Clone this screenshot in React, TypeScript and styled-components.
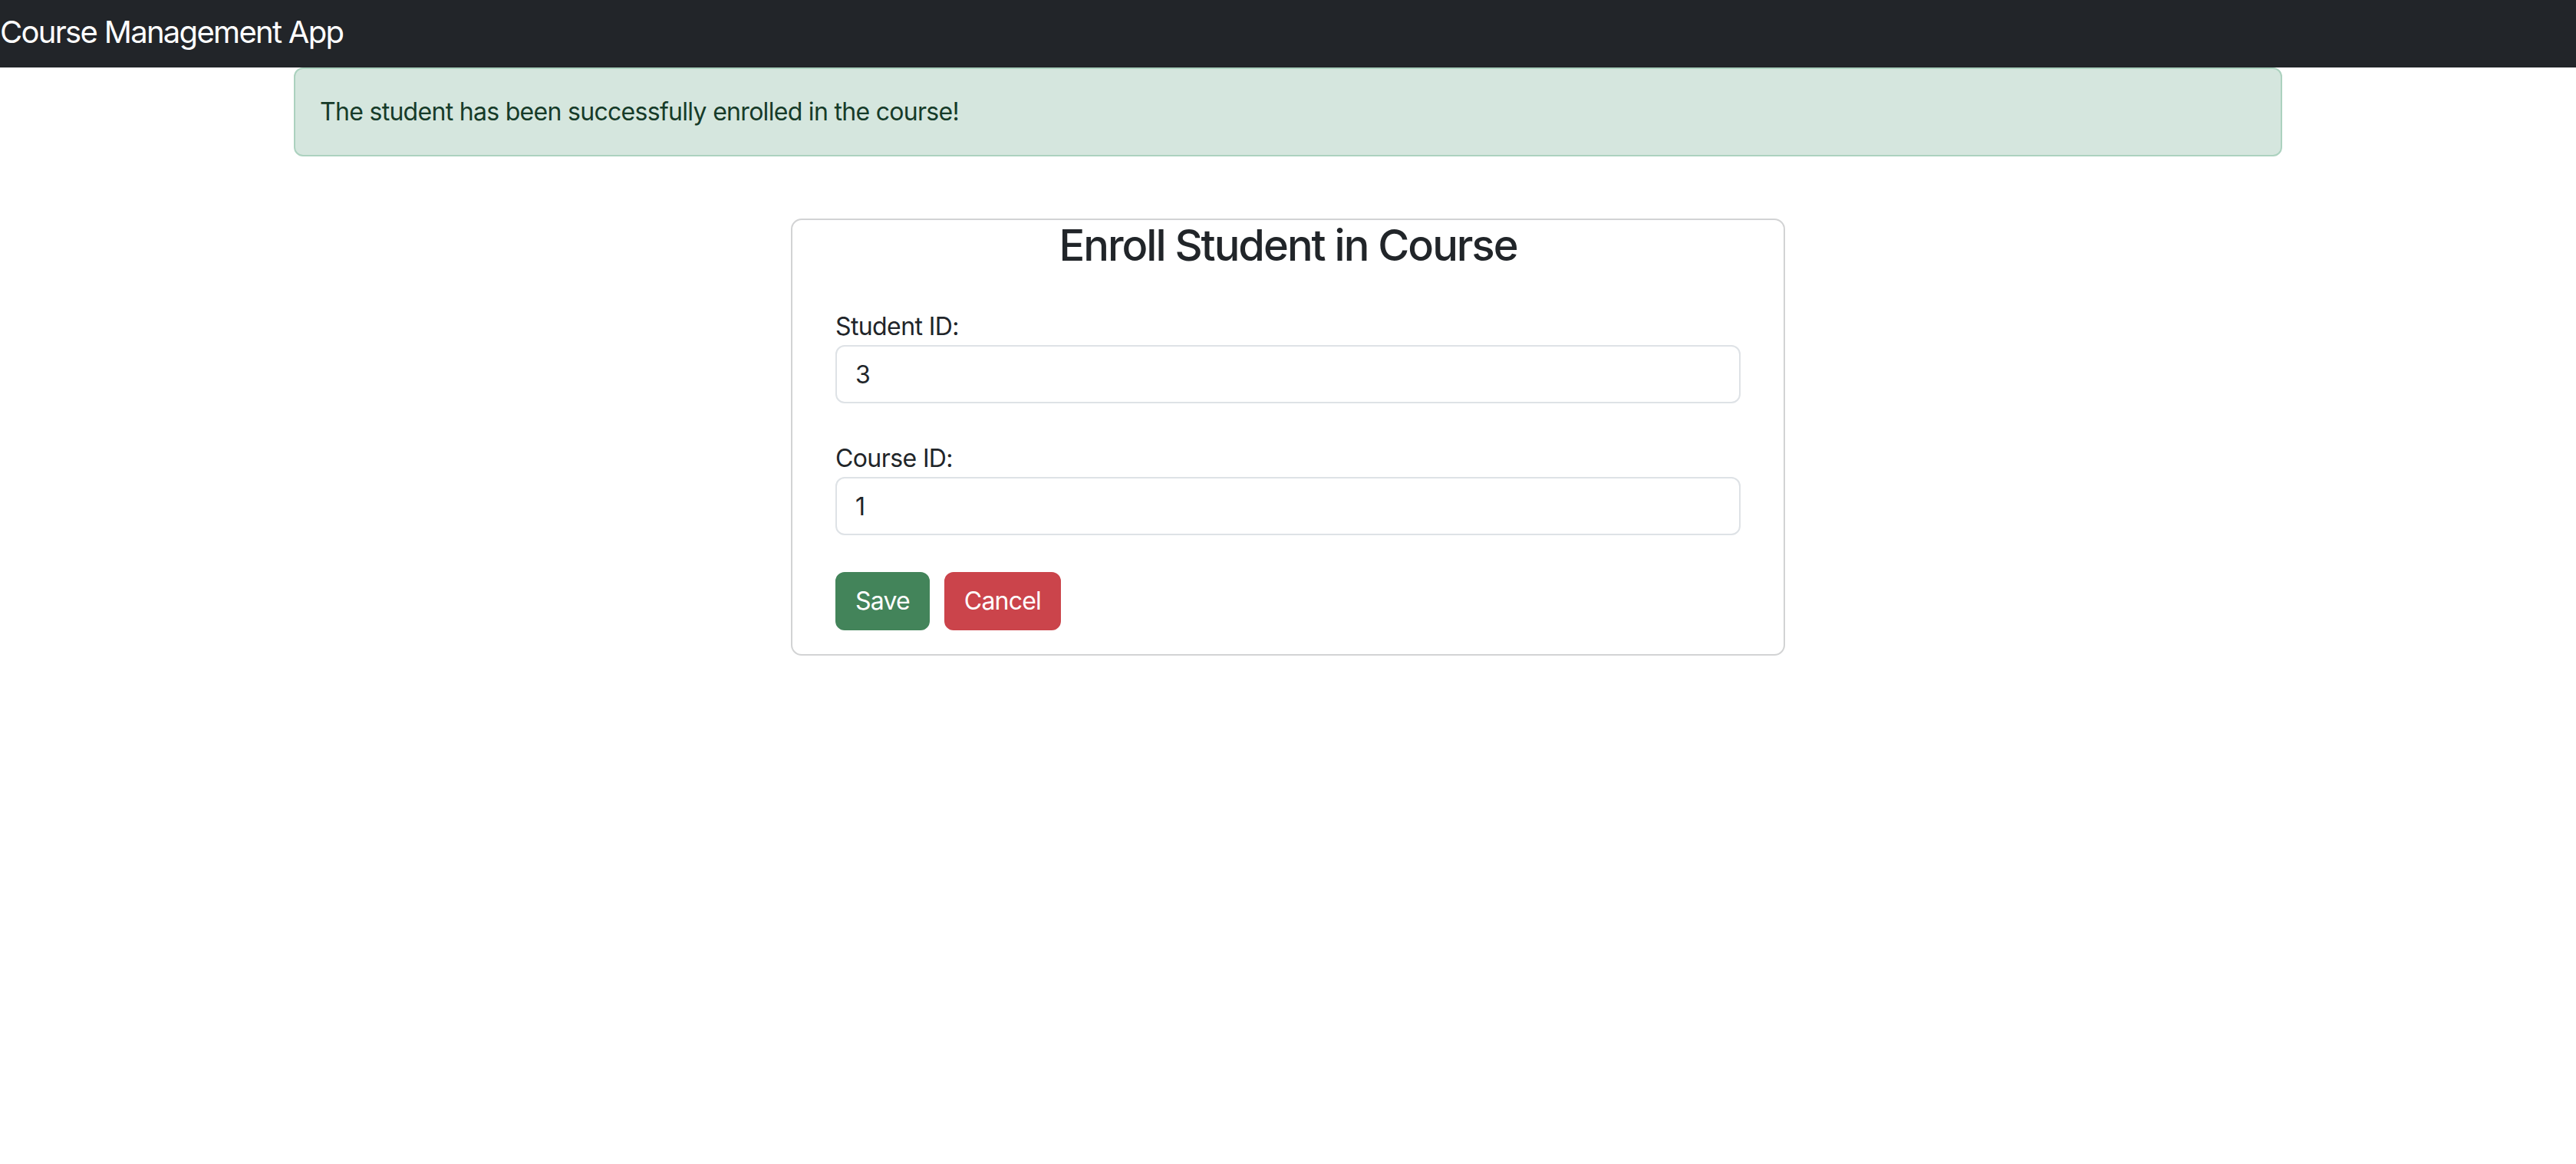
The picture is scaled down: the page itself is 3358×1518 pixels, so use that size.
import { useState } from "react";
import styled, { createGlobalStyle } from "styled-components";

const GlobalStyle = createGlobalStyle`
  * {
    box-sizing: border-box;
  }
  body {
    margin: 0;
    background: #ffffff;
    color: #212529;
    font-family: Inter, "Noto Sans", "Liberation Sans", sans-serif;
  }
`;

const NavBar = styled.nav`
  height: 88px;
  background: #222529;
  display: flex;
  align-items: center;
  padding-bottom: 4px;
`;

const Brand = styled.span`
  color: #ffffff;
  font-size: 40px;
  line-height: 60px;
  letter-spacing: -1.7px;
`;

const Container = styled.div`
  max-width: 2640px;
  margin: 0 auto;
  padding: 0 24px;
`;

const Alert = styled.div`
  background: #d5e6de;
  border: 2px solid #acd2bf;
  border-radius: 12px;
  padding: 32px;
  color: #163b29;
  font-size: 32px;
  line-height: 48px;
  letter-spacing: -0.7px;
`;

const Card = styled.div`
  width: 50%;
  margin: 81px auto 0;
  border: 2px solid #d2d3d4;
  border-radius: 14px;
  padding: 0 56px 31px;
`;

const Title = styled.h3`
  margin: 0 0 48px;
  text-align: center;
  font-size: 56px;
  font-weight: 500;
  line-height: 1.2;
  letter-spacing: -2px;
  color: #212529;
`;

const Field = styled.div`
  margin-bottom: 48px;
`;

const Label = styled.label`
  display: block;
  font-size: 32px;
  line-height: 48px;
  letter-spacing: -0.6px;
  color: #212529;
`;

const Input = styled.input`
  display: block;
  width: 100%;
  height: 76px;
  padding: 12px 24px;
  border: 2px solid #dee2e6;
  border-radius: 12px;
  font-family: inherit;
  font-size: 32px;
  line-height: 48px;
  color: #212529;
  background: #ffffff;
  outline: none;
`;

const Actions = styled.div`
  display: flex;
  gap: 19px;
`;

const Button = styled.button<{ $variant: "save" | "cancel" }>`
  height: 76px;
  padding: 12px 24px;
  border: 2px solid
    ${(p) => (p.$variant === "save" ? "#43845a" : "#cb444b")};
  border-radius: 12px;
  background: ${(p) => (p.$variant === "save" ? "#43845a" : "#cb444b")};
  color: #ffffff;
  font-family: inherit;
  font-size: 32px;
  line-height: 48px;
  letter-spacing: -0.8px;
  cursor: pointer;
`;

function App() {
  const [studentId, setStudentId] = useState("3");
  const [courseId, setCourseId] = useState("1");

  return (
    <>
      <GlobalStyle />
      <NavBar>
        <Brand>Course Management App</Brand>
      </NavBar>
      <Container>
        <Alert>The student has been successfully enrolled in the course!</Alert>
        <Card>
          <Title>Enroll Student in Course</Title>
          <form onSubmit={(e) => e.preventDefault()}>
            <Field>
              <Label htmlFor="studentId">Student ID:</Label>
              <Input
                id="studentId"
                type="text"
                value={studentId}
                onChange={(e) => setStudentId(e.target.value)}
              />
            </Field>
            <Field>
              <Label htmlFor="courseId">Course ID:</Label>
              <Input
                id="courseId"
                type="text"
                value={courseId}
                onChange={(e) => setCourseId(e.target.value)}
              />
            </Field>
            <Actions>
              <Button type="submit" $variant="save">
                Save
              </Button>
              <Button type="button" $variant="cancel">
                Cancel
              </Button>
            </Actions>
          </form>
        </Card>
      </Container>
    </>
  );
}

export default App;
